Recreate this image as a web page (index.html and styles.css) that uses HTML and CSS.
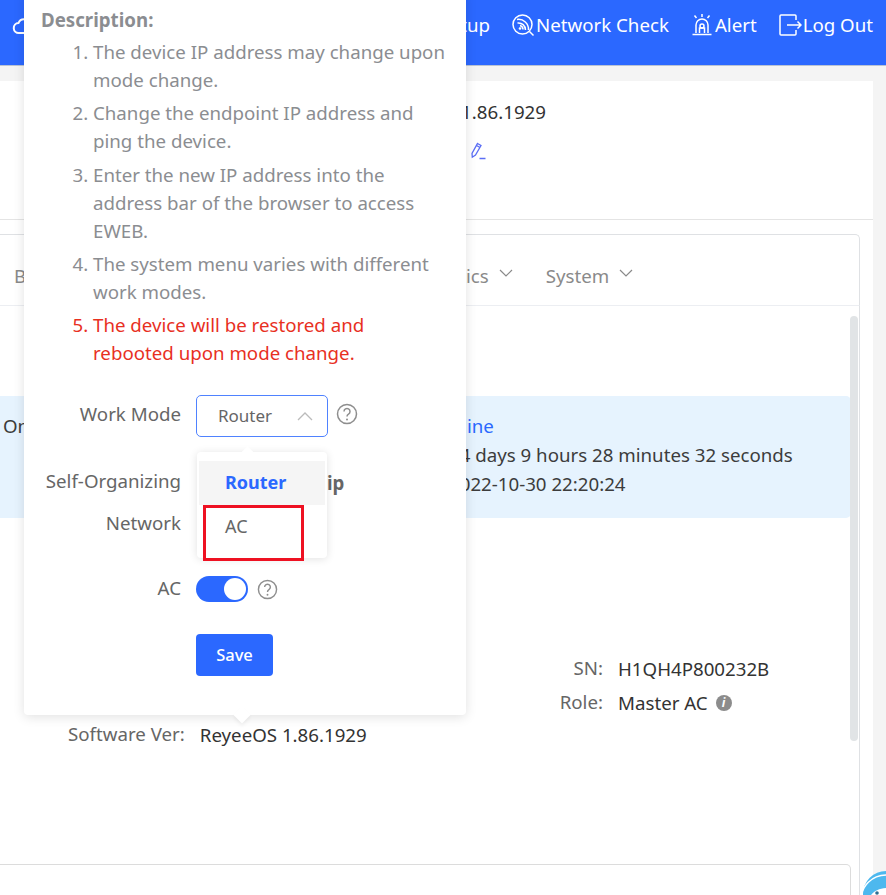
FILE: index.html
```html
<!DOCTYPE html>
<html lang="en">
<head>
<meta charset="utf-8">
<title>EWEB</title>
<link rel="stylesheet" href="styles.css">
</head>
<body>
<div class="page">
  <header class="topbar">
    <svg class="cloud" viewBox="0 0 24 20"><path d="M7 17h10a4.500 4.500 0 0 0 1-8.900A6 6 0 0 0 6.500 7 5 5 0 0 0 7 17z"/></svg>
    <nav class="topnav">
      <span class="navitem">Setup</span>
      <span class="navitem">
        <svg class="navicon" viewBox="0 0 24 24"><circle cx="11.500" cy="11.500" r="9.500"/><path d="M18.500 18.500l4 4M6.500 10a7 7 0 0 1 8 7M6 6.500a10 10 0 0 1 11.500 10.500M9 12.500a4 4 0 0 1 3 4"/><circle class="navdot" cx="9" cy="15.500" r="1.300"/></svg>
        Network Check
      </span>
      <span class="navitem">
        <svg class="navicon" viewBox="0 0 24 24"><path d="M6 20v-8a6 6 0 0 1 12 0v8M2.500 21.500h19M12 1v3M4.500 2.500l2 2.500M19.500 2.500l-2 2.500M9.500 20v-5h5v5"/><circle cx="12" cy="13" r="2"/></svg>
        Alert
      </span>
      <span class="navitem">
        <svg class="navicon" viewBox="0 0 24 24"><path d="M18 7V3a1 1 0 0 0-1-1H3a1 1 0 0 0-1 1v18a1 1 0 0 0 1 1h14a1 1 0 0 0 1-1v-4M9 12h14M19.500 8.500L23 12l-3.500 3.500"/></svg>
        Log Out
      </span>
    </nav>
  </header>

  <main class="content">
    <section class="summary">
      <div class="summary-ver">ReyeeOS 1.86.1929</div>
      <div class="summary-edit">
        <svg class="pencil" viewBox="0 0 16 18"><path d="M7 1.500l3.500 2-5.500 9.500-3.200 2.200-.3-3.800zM6 3.500l3.500 2M9 16.500h6"/></svg>
      </div>
    </section>

    <section class="card">
      <div class="tabs">
        <span class="tab tab-b">Basics</span>
        <span class="tab tab-diag">Diagnostics <svg class="caret" viewBox="0 0 14 8"><path d="M1 1l6 6 6-6"/></svg></span>
        <span class="tab">System <svg class="caret" viewBox="0 0 14 8"><path d="M1 1l6 6 6-6"/></svg></span>
      </div>
      <div class="card-body">
        <div class="card-main">
          <div class="status">
            <div class="status-left">Online Status</div>
            <div class="status-right">
              <div class="status-online">Online</div>
              <div>14 days 9 hours 28 minutes 32 seconds</div>
              <div>2022-10-30 22:20:24</div>
            </div>
          </div>
          <div class="info">
            <div class="info-col">
              <div class="info-row"><span class="info-key">Software Ver:</span><span>ReyeeOS 1.86.1929</span></div>
            </div>
            <div class="info-col info-side">
              <div class="info-row"><span class="info-key side-key">SN:</span><span>H1QH4P800232B</span></div>
              <div class="info-row"><span class="info-key side-key">Role:</span><span>Master AC</span><span class="info-i">i</span></div>
            </div>
          </div>
          <div class="lower-card"></div>
        </div>
        <div class="scroll"><div class="thumb"></div></div>
      </div>
    </section>
  </main>

  <svg class="helper" viewBox="0 0 40 40"><circle class="helper-head" cx="28" cy="29" r="23"/><path class="helper-face" d="M11 34c3-9 14-13 29-10v16H12z"/><path class="helper-band" d="M3 35a25 25 0 0 1 25-25"/><circle class="helper-eye" cx="19" cy="28" r="1.800"/></svg>

  <aside class="popover">
    <div class="desc-title">Description:</div>
    <ol class="desc-list">
      <li>The device IP address may change upon mode change.</li>
      <li>Change the endpoint IP address and ping the device.</li>
      <li>Enter the new IP address into the address bar of the browser to access EWEB.</li>
      <li>The system menu varies with different work modes.</li>
      <li class="warn">The device will be restored and rebooted upon mode change.</li>
    </ol>
    <form class="form">
      <div class="form-row row-mode">
        <label class="form-label">Work Mode</label>
        <div class="select"><span>Router</span><svg class="select-caret" viewBox="0 0 16 9"><path d="M1 8l7-7 7 7"/></svg></div>
        <svg class="help" viewBox="0 0 22 22"><circle cx="11" cy="11" r="9.500"/><path d="M8 8.500a3 3 0 1 1 4.500 2.600c-1 .6-1.500 1.100-1.500 2.400"/><circle class="dot" cx="11" cy="16.500" r="1"/></svg>
      </div>
      <div class="form-row row-self">
        <label class="form-label">Self-Organizing<br>Network</label>
        <span class="self-value">ip</span>
      </div>
      <div class="form-row row-ac">
        <label class="form-label">AC</label>
        <div class="switch"><span class="knob"></span></div>
        <svg class="help help-small" viewBox="0 0 22 22"><circle cx="11" cy="11" r="9.500"/><path d="M8 8.500a3 3 0 1 1 4.500 2.600c-1 .6-1.500 1.100-1.500 2.400"/><circle class="dot" cx="11" cy="16.500" r="1"/></svg>
      </div>
      <div class="form-row row-save">
        <span class="form-label"></span>
        <button type="button" class="save">Save</button>
      </div>
    </form>
    <div class="menu">
      <div class="menu-item selected">Router</div>
      <div class="menu-item">AC</div>
    </div>
    <div class="highlight"></div>
    <span class="arrow"></span>
  </aside>
</div>
</body>
</html>
```
FILE: styles.css
```css
* { box-sizing: border-box; }
html, body { margin: 0; padding: 0; }
body { font-family: "Noto Sans", "Open Sans", sans-serif; font-size: 18.7px; color: #4a4a4a; background: #f4f4f4; }
.page { position: relative; width: 886px; height: 895px; overflow: hidden; background: #f4f4f4; }

.topbar { height: 66px; background: #2b68ff; border-bottom: 1px solid #b9c3d4; display: flex; align-items: flex-start; justify-content: space-between; padding: 13px 13px 0 12px; color: #fff; }
.cloud { width: 24px; height: 20px; margin-top: 3px; fill: none; stroke: #fff; stroke-width: 2; }
.topnav { display: flex; gap: 21px; line-height: 24px; }
.navitem { display: flex; align-items: center; gap: 1px; white-space: nowrap; }
.navicon { width: 24px; height: 24px; fill: none; stroke: #fff; stroke-width: 1.500; }
.navdot { fill: #fff; stroke: none; }

.content { padding: 15px 13px 0 0; }
.summary { background: #fff; height: 139px; border-bottom: 1px solid #e4e4e4; padding: 18px 0 0 379px; color: #333; }
.summary-ver { line-height: 26px; }
.summary-edit { margin-top: 17px; padding-left: 91px; }
.pencil { width: 17px; height: 18px; fill: none; stroke: #5b6ef5; stroke-width: 1.300; display: block; }

.card { background: #fff; padding-top: 14px; height: 675px; }
.tabs { height: 72px; width: 860px; border: 1px solid #dfe1e4; border-bottom: 1px solid #eceef2; border-left: 0; border-radius: 0 5px 0 0; display: flex; align-items: center; gap: 33px; padding: 11px 0 0 14px; color: #8a8a8a; }
.tab { display: flex; align-items: center; gap: 10px; white-space: nowrap; }
.tab-b { flex: 0 0 300px; overflow: hidden; }
.tab-diag { margin-left: 40px; }
.caret { width: 14px; height: 8px; margin-top: -6px; fill: none; stroke: #8a8a8a; stroke-width: 1.200; }

.card-body { display: flex; width: 860px; height: 600px; border-right: 1px solid #dfe1e4; }
.card-main { flex: 1; padding-top: 90px; }
.status { height: 122px; width: 851px; background: #e6f3fe; border-radius: 0 5px 5px 0; display: flex; padding-top: 15px; line-height: 29px; color: #3c3c3c; }
.status-left { padding-left: 3px; width: 449px; white-space: nowrap; }
.status-online { color: #2b68ff; margin-left: -13px; }

.info { display: flex; padding: 134px 0 0 68px; }
.info-col { width: 491px; padding-top: 66px; }
.info-side { padding-top: 0; width: auto; }
.info-row { display: flex; gap: 15px; line-height: 34px; white-space: nowrap; color: #333; align-items: center; }
.info-key { color: #666; margin-top: -3px; }
.side-key { width: 44px; text-align: right; }
.info-i { width: 16px; height: 16px; margin-left: -7px; background: #8c8c8c; color: #fff; border-radius: 50%; font-size: 12px; line-height: 16px; text-align: center; font-weight: 700; font-style: italic; }
.lower-card { margin-top: 112px; width: 851px; height: 60px; border: 1px solid #dcdcdc; border-left: 0; border-radius: 0 5px 0 0; }

.scroll { width: 9px; padding-top: 10px; margin-left: -9px; }
.thumb { width: 8px; height: 425px; border-radius: 4px; background: #e1e4e6; }

.helper { position: absolute; left: 858px; top: 865px; width: 40px; height: 40px; }
.helper-head { fill: #4db8ee; }
.helper-face { fill: #fff; }
.helper-band { fill: none; stroke: #fff; stroke-width: 1.500; }
.helper-eye { fill: #2f6f93; }

.popover { position: absolute; left: 24px; top: -10px; width: 442px; height: 725px; background: #fff; border-radius: 4px; box-shadow: 0 2px 12px rgba(0,0,0,.12); padding: 16px 20px 0 17px; color: #8b8d91; line-height: 28px; }
.desc-title { font-weight: 700; }
.desc-list { margin: 4px 0 0; padding: 0 0 0 52px; }
.desc-list li { margin-bottom: 5.250px; }
.warn { color: #e8301f; }

.form { margin-top: 28px; color: #666; }
.form-row { display: flex; align-items: flex-start; }
.form-label { width: 140px; text-align: right; flex: none; margin-right: 15px; }
.row-mode { height: 69px; }
.row-mode .form-label { line-height: 38px; }
.select { width: 132px; height: 42px; border: 1px solid #4f82ff; border-radius: 5px; display: flex; align-items: center; justify-content: space-between; padding: 0 14px 0 21px; font-size: 17px; }
.select-caret { width: 16px; height: 9px; fill: none; stroke: #bbb; stroke-width: 1.300; }
.help { width: 22px; height: 22px; margin: 8px 0 0 8px; fill: none; stroke: #8e8e8e; stroke-width: 1.500; }
.help .dot { fill: #8e8e8e; stroke: none; }
.row-self { height: 111px; line-height: 42px; }
.row-self .form-label { line-height: 42px; margin-top: -4px; }
.self-value { margin-left: 131px; font-weight: 700; margin-top: -2px; }
.row-ac { height: 59px; }
.row-ac .form-label { line-height: 26px; }
.switch { width: 52px; height: 26px; border-radius: 13px; background: #2b68ff; position: relative; margin-top: 1px; }
.knob { position: absolute; right: 2px; top: 2px; width: 22px; height: 22px; border-radius: 50%; background: #fff; }
.help-small { width: 21px; height: 21px; margin: 4px 0 0 9px; }
.save { width: 77px; height: 42px; border: 0; border-radius: 4px; background: #2b68ff; color: #fff; font: 500 16.500px "Noto Sans", sans-serif; padding: 0 0 2px; }

.menu { position: absolute; left: 173px; top: 462px; width: 130px; height: 106px; background: #fff; border-radius: 4px; box-shadow: 0 1px 8px rgba(0,0,0,.12); padding-top: 9px; font-size: 18px; }
.menu::before { content: ""; position: absolute; left: 46px; top: -4px; width: 9px; height: 9px; background: #fff; transform: rotate(45deg); }
.menu-item { height: 44px; line-height: 42px; padding-left: 28px; color: #666; }
.selected { position: relative; background: #f5f5f5; color: #2b68ff; font-weight: 700; margin: 0 2px; padding-left: 26px; }
.highlight { position: absolute; left: 179px; top: 515px; width: 101px; height: 56px; border: 3px solid #ee1122; }
.arrow { position: absolute; left: 212px; top: 719px; width: 12px; height: 12px; background: #fff; transform: rotate(45deg); box-shadow: 2px 2px 4px rgba(0,0,0,.06); }
```
